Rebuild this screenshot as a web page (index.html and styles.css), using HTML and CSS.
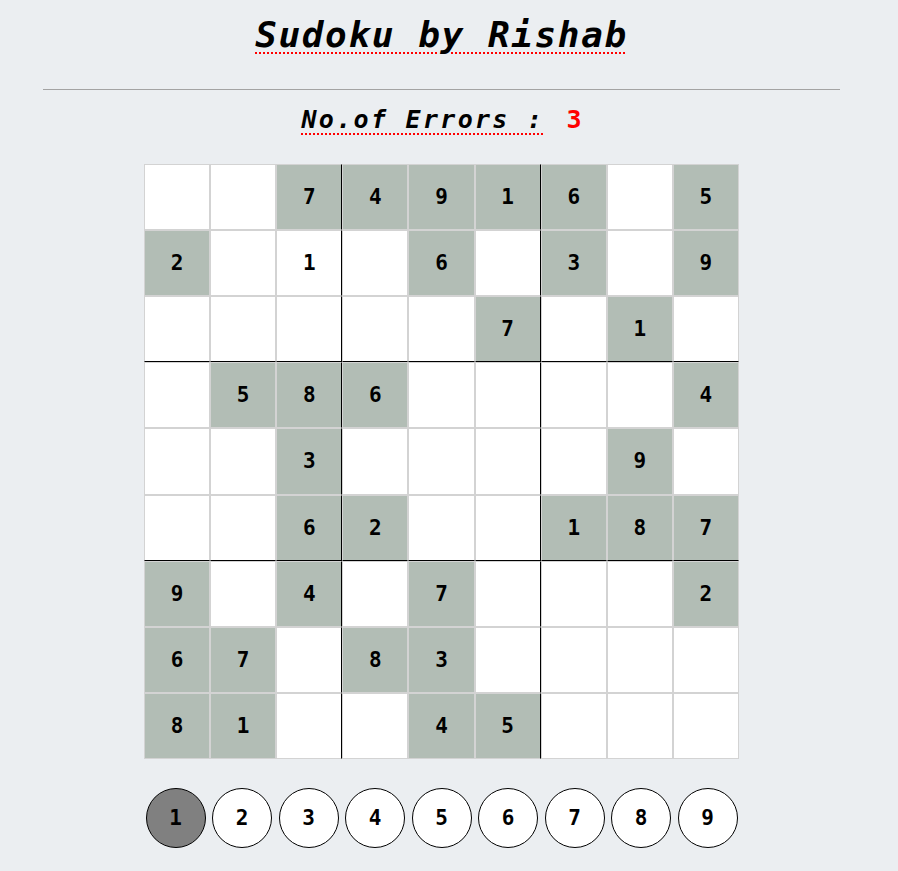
FILE: index.html
```html
<!DOCTYPE html>
<html lang="en">
<head>
<meta charset="utf-8">
<title>Sudoku</title>
<link rel="stylesheet" href="styles.css">
</head>
<body>
<main class="page">
  <h1 class="title"><span class="spell">Sudoku by Rishab</span></h1>
  <hr class="rule">
  <h2 class="errors"><span class="spell">No.of Errors :</span><span class="count">3</span></h2>

  <div class="board">
    <div class="tile"></div><div class="tile"></div><div class="tile start vline">7</div><div class="tile start">4</div><div class="tile start">9</div><div class="tile start vline">1</div><div class="tile start">6</div><div class="tile"></div><div class="tile start">5</div>
    <div class="tile start">2</div><div class="tile"></div><div class="tile vline">1</div><div class="tile"></div><div class="tile start">6</div><div class="tile vline"></div><div class="tile start">3</div><div class="tile"></div><div class="tile start">9</div>
    <div class="tile hline"></div><div class="tile hline"></div><div class="tile hline vline"></div><div class="tile hline"></div><div class="tile hline"></div><div class="tile start hline vline">7</div><div class="tile hline"></div><div class="tile start hline">1</div><div class="tile hline"></div>
    <div class="tile"></div><div class="tile start">5</div><div class="tile start vline">8</div><div class="tile start">6</div><div class="tile"></div><div class="tile vline"></div><div class="tile"></div><div class="tile"></div><div class="tile start">4</div>
    <div class="tile"></div><div class="tile"></div><div class="tile start vline">3</div><div class="tile"></div><div class="tile"></div><div class="tile vline"></div><div class="tile"></div><div class="tile start">9</div><div class="tile"></div>
    <div class="tile hline"></div><div class="tile hline"></div><div class="tile start hline vline">6</div><div class="tile start hline">2</div><div class="tile hline"></div><div class="tile hline vline"></div><div class="tile start hline">1</div><div class="tile start hline">8</div><div class="tile start hline">7</div>
    <div class="tile start">9</div><div class="tile"></div><div class="tile start vline">4</div><div class="tile"></div><div class="tile start">7</div><div class="tile vline"></div><div class="tile"></div><div class="tile"></div><div class="tile start">2</div>
    <div class="tile start">6</div><div class="tile start">7</div><div class="tile vline"></div><div class="tile start">8</div><div class="tile start">3</div><div class="tile vline"></div><div class="tile"></div><div class="tile"></div><div class="tile"></div>
    <div class="tile start">8</div><div class="tile start">1</div><div class="tile vline"></div><div class="tile"></div><div class="tile start">4</div><div class="tile start vline">5</div><div class="tile"></div><div class="tile"></div><div class="tile"></div>
  </div>

  <div class="digits">
    <div class="number selected">1</div>
    <div class="number">2</div>
    <div class="number">3</div>
    <div class="number">4</div>
    <div class="number">5</div>
    <div class="number">6</div>
    <div class="number">7</div>
    <div class="number">8</div>
    <div class="number">9</div>
  </div>
</main>
</body>
</html>
```

FILE: styles.css
```css
html, body {
  margin: 0;
  padding: 0;
  background: #ebeef1;
}

body {
  font-family: "DejaVu Sans Mono", "Liberation Mono", monospace;
  color: #000;
}

.page {
  width: 867px;
  margin-left: 8px;
  padding-top: 17px;
  display: flex;
  flex-direction: column;
  align-items: center;
}

.title {
  margin: 0;
  font-size: 36px;
  line-height: 1;
  letter-spacing: 1.6px;
  font-style: italic;
  font-weight: bold;
  white-space: pre;
}

.spell {
  text-decoration: underline dotted red;
  text-decoration-thickness: 2px;
  text-underline-offset: 5px;
}

.rule {
  width: 797px;
  margin: 36px 0 0 0;
  border: 0;
  border-top: 1px solid #a3a3a3;
  height: 0;
}

.errors {
  margin: 17px 0 0 0;
  font-size: 25px;
  line-height: 1;
  letter-spacing: 2.3px;
  font-style: italic;
  font-weight: bold;
  white-space: pre;
  display: flex;
  align-items: baseline;
}

.count {
  color: #ff0000;
  font-style: normal;
  font-size: 25px;
  letter-spacing: 0;
  margin-left: 22px;
}

.board {
  margin-top: 32px;
  width: 595px;
  height: 595px;
  display: grid;
  grid-template-columns: repeat(9, 1fr);
  grid-template-rows: repeat(9, 1fr);
}

.tile {
  box-sizing: border-box;
  border: 1px solid #d3d3d3;
  background: #ffffff;
  display: flex;
  align-items: center;
  justify-content: center;
  font-size: 21px;
  font-weight: bold;
}

.tile.start {
  background: #b2bdb5;
}

.tile.vline {
  border-right: 1px solid #000;
}

.tile.hline {
  border-bottom: 1px solid #000;
}

.digits {
  margin-top: 29px;
  display: flex;
  width: 596px;
  justify-content: space-between;
  padding: 0 2px;
  box-sizing: border-box;
}

.number {
  box-sizing: border-box;
  width: 60px;
  height: 60px;
  border: 1px solid #000;
  border-radius: 50%;
  background: #fff;
  display: flex;
  align-items: center;
  justify-content: center;
  font-size: 21px;
  font-weight: bold;
}

.number.selected {
  background: #808080;
}
```
